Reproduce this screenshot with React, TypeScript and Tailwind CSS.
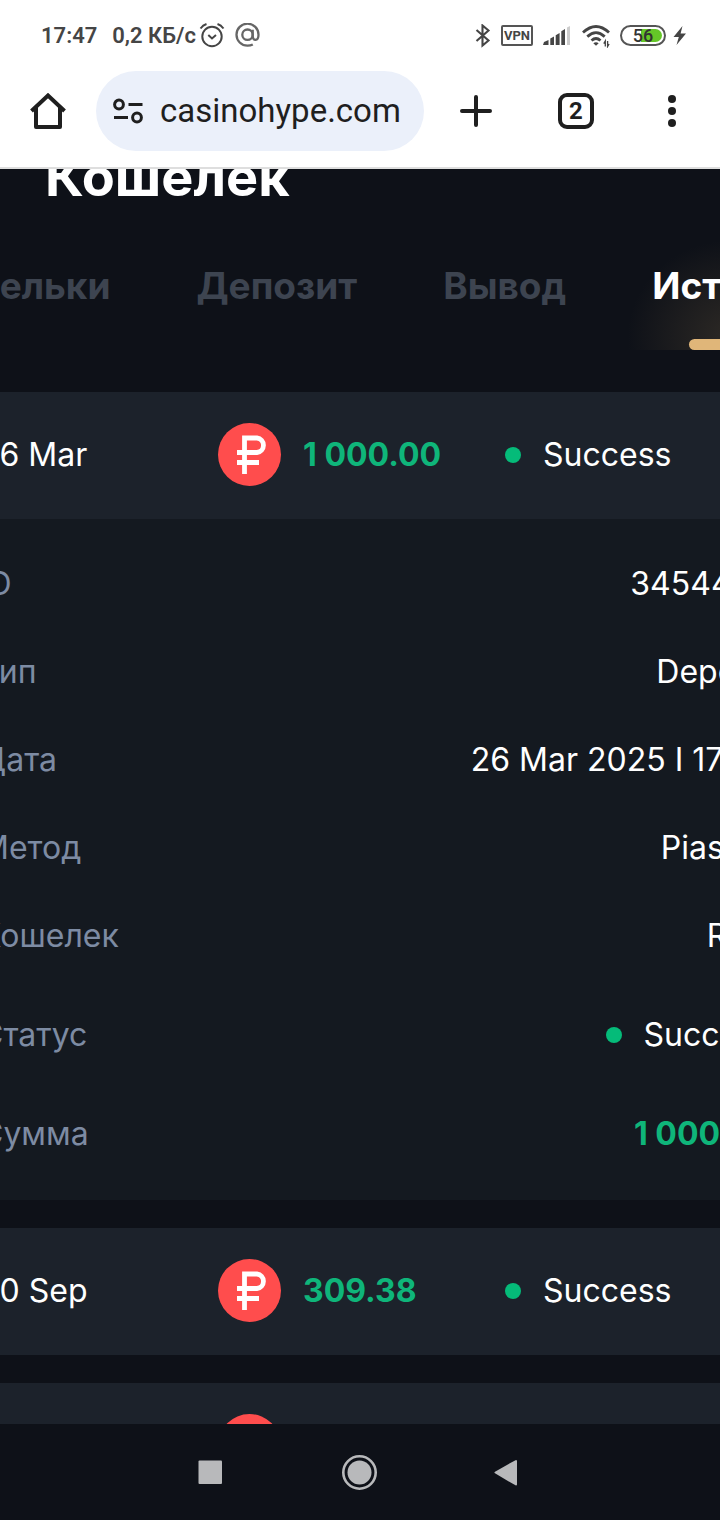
import { useState } from "react";

const details = [
  { label: "ID", value: "3454434" },
  { label: "Тип", value: "Deposit" },
  { label: "Дата", value: "26 Mar 2025 I 17:46" },
  { label: "Метод", value: "Piastrix" },
  { label: "Кошелек", value: "RUB" },
];

const tabs = ["Кошельки", "Депозит", "Вывод", "История"];

const StatusBar = () => (
  <div className="flex h-[71px] items-center justify-between bg-white pr-[33px] pl-[41px] font-[Roboto,sans-serif] text-[22px] font-semibold text-[#454545]">
    <div className="flex items-center">
      <span>17:47</span>
      <span className="ml-[15px]">0,2 КБ/с</span>
      <svg className="ml-[3px]" width="26" height="26" viewBox="0 0 26 26" fill="none" stroke="currentColor" strokeWidth="2">
        <circle cx="13" cy="13.5" r="9.7" />
        <path d="M1.5 5.5 Q4 2.2 7.5 1 M24.5 5.5 Q22 2.2 18.5 1" />
        <path d="M9.3 12.1 L13 15.5 L17 12.1" />
      </svg>
      <svg className="ml-[10px] text-[#666]" width="26" height="26" viewBox="0 0 26 26" fill="none" stroke="currentColor" strokeWidth="2.3">
        <circle cx="12.5" cy="11.7" r="5.2" />
        <path d="M17.7 6.7 V13.2 Q17.9 16.8 20.5 16.8 Q23.5 16.6 23.5 11.7 A11 11 0 1 0 12.5 22.7 Q15.5 22.7 17.8 21.5" />
      </svg>
    </div>

    <div className="flex items-center">
      <svg width="16" height="24" viewBox="0 0 16 24" fill="none" stroke="currentColor" strokeWidth="2.1">
        <path d="M1.5 6 L13.5 16.5 L7.5 21.5 V1.5 L13.5 6.5 L1.5 17" />
      </svg>
      <span className="ml-[10px] flex h-[21px] w-8 items-center justify-center rounded-[2px] border-2 border-[#555] text-[13px] font-bold">
        VPN
      </span>
      <svg className="ml-[10px]" width="28" height="20" viewBox="0 0 28 20" fill="currentColor">
        <path d="M0 19 L1 16 L5.5 14 V19 Z M7.3 19 V12.5 L11 10.5 V19 Z M12.7 19 V9.2 L16.6 7 V19 Z M18.3 19 V5.3 L22 3 V19 Z" />
        <path d="M24 19 V1.5 L27 0 V19 Z" fill="#ccc" />
      </svg>
      <svg className="ml-[11px]" width="29" height="24" viewBox="0 0 29 24" fill="none" stroke="currentColor" strokeWidth="2.8">
        <path d="M1 8.5 Q14 -3.5 27 8.5 M5.3 12.6 Q14 4.6 22.7 12.6 M9.5 16.5 Q14 12.4 18.5 16.5" />
        <path d="M11.3 19.2 Q14 17.3 16.7 19.2 L14 21.8 Z" fill="currentColor" stroke="none" />
        <path d="M23.3 22.5 V17 L21.8 19.6 M25.6 17 V22.5 L27.1 20" strokeWidth="1.3" />
      </svg>
      <div className="relative ml-[9px] flex h-[21px] w-[46px] items-center justify-center rounded-full border-2 border-[#555]">
        <span className="absolute inset-y-[2px] right-[2px] w-[21px] rounded-r-full bg-[#65c728]" />
        <span className="relative text-[18px] font-medium text-[#333]">56</span>
      </div>
      <svg className="ml-[7px]" width="14" height="20" viewBox="0 0 14 20" fill="currentColor">
        <path d="M9.5 0 L0.5 11 H5.8 L3.5 19 L13 7.5 H7.6 Z" />
      </svg>
    </div>
  </div>
);

const Toolbar = () => (
  <header className="flex h-[98px] items-start border-b-2 border-[#dedede] bg-white font-[Roboto,sans-serif] text-[#1f1f1f]">
    <button className="flex h-20 w-24 items-center justify-center" aria-label="Home">
      <svg width="36" height="36" viewBox="0 0 36 36" fill="none" stroke="currentColor" strokeWidth="4" strokeLinejoin="round">
        <path d="M1.5 18 L18 2.5 L34.5 18" strokeLinejoin="miter" />
        <path d="M6 14 V34 H30 V14" />
      </svg>
    </button>
    <div className="flex h-20 min-w-0 flex-1 items-center rounded-full bg-[#ebf0fa] pl-4">
      <svg className="shrink-0" width="32" height="28" viewBox="0 0 32 28" fill="none" stroke="currentColor" strokeWidth="3">
        <circle cx="7" cy="7.5" r="4.4" />
        <path d="M16.5 7.5 H30.5 M2 20.5 H16" />
        <circle cx="25" cy="20.5" r="4.4" />
      </svg>
      <input
        className="ml-4 w-full min-w-0 bg-transparent text-[33px] outline-none"
        aria-label="URL"
        defaultValue="casinohype.com"
      />
    </div>
    <button className="flex h-20 w-[104px] items-center justify-center" aria-label="New tab">
      <svg width="32" height="32" viewBox="0 0 32 32" stroke="currentColor" strokeWidth="4" strokeLinecap="round">
        <path d="M16 2 V30 M2 16 H30" />
      </svg>
    </button>
    <button className="flex h-20 w-24 items-center justify-center" aria-label="Tabs">
      <span className="flex size-9 items-center justify-center rounded-[9px] border-4 border-[#1f1f1f] text-2xl font-bold">
        2
      </span>
    </button>
    <button className="flex h-20 w-24 items-center justify-center" aria-label="Menu">
      <svg width="8" height="32" viewBox="0 0 8 32" fill="currentColor">
        <circle cx="4" cy="4" r="4" />
        <circle cx="4" cy="16" r="4" />
        <circle cx="4" cy="28" r="4" />
      </svg>
    </button>
  </header>
);

const RubleIcon = () => (
  <svg className="shrink-0" width="64" height="64" viewBox="0 0 64 64">
    <circle cx="31.5" cy="31.5" r="31.5" fill="#ff4d4d" />
    <path
      d="M26.5 51 V15 H39 A7.3 7.3 0 0 1 39 29.5 H19 M19 39.5 H41"
      fill="none"
      stroke="#fff"
      strokeWidth="4.8"
    />
  </svg>
);

const Status = () => (
  <span className="flex items-center gap-[22px]">
    <span className="size-4 rounded-full bg-[#05bb79]" />
    Success
  </span>
);

const RowHeader = ({ date, amount }: { date: string; amount: string }) => (
  <button className="flex h-[127px] w-full items-center bg-[#1c222b] pb-[2px] pl-[22px] text-left">
    <span className="w-[238px]">{date}</span>
    <RubleIcon />
    <span className="ml-[21px] w-[202px] font-bold text-[#0fb57a]">{amount}</span>
    <Status />
  </button>
);

const App = () => {
  const [active, setActive] = useState("История");

  return (
    <div className="flex h-screen flex-col overflow-hidden bg-[#0e1118]">
      <StatusBar />
      <Toolbar />

      <main className="min-h-0 flex-1 overflow-hidden font-[Inter,sans-serif] text-[32px] leading-10 text-white">
        <h1 className="-mt-6 pl-[45px] text-[54px] leading-[64px] font-bold">Кошелек</h1>

        <nav className="mt-[14px] -ml-[123px] flex">
          {tabs.map((tab) => (
            <button
              key={tab}
              onClick={() => setActive(tab)}
              className={`relative h-[127px] shrink-0 px-[43px] pb-[2px] text-[37px] font-bold ${
                active === tab
                  ? "bg-[radial-gradient(ellipse_at_50%_90%,#2d2925_0%,#0e1118_60%)] text-white"
                  : "text-[#3d4450]"
              }`}
            >
              {tab}
              {active === tab && (
                <span className="absolute bottom-0 left-1/2 h-[11px] w-[84px] -translate-x-1/2 rounded-full bg-[#e0b679]" />
              )}
            </button>
          ))}
        </nav>

        {/* History list is wider than the viewport on both sides */}
        <div className="mt-[42px] -mr-[74px] -ml-[42px] flex flex-col gap-7">
          <section className="bg-[#141920]">
            <RowHeader date="26 Mar" amount="1 000.00" />
            <dl className="px-[22px] pt-[21px] pb-[22px]">
              {details.map((item) => (
                <div key={item.label} className="flex h-[88px] items-center justify-between">
                  <dt className="text-[#7d8ba3]">{item.label}</dt>
                  <dd>{item.value}</dd>
                </div>
              ))}
              <div className="flex h-[110px] items-center justify-between">
                <dt className="text-[#7d8ba3]">Статус</dt>
                <dd>
                  <Status />
                </dd>
              </div>
              <div className="flex h-[88px] items-center justify-between">
                <dt className="text-[#7d8ba3]">Сумма</dt>
                <dd className="font-bold text-[#0fb57a]">1 000.00</dd>
              </div>
            </dl>
          </section>
          <RowHeader date="20 Sep" amount="309.38" />
          <RowHeader date="" amount="" />
        </div>
      </main>

      <footer className="flex h-24 items-center justify-center bg-[#0e1118] text-[#b8b9bb]">
        <button className="flex w-[148px] justify-center" aria-label="Recent apps">
          <svg width="36" height="36" viewBox="0 0 36 36" fill="currentColor">
            <rect x="4.5" y="6.5" width="23.5" height="23.5" rx="1" />
          </svg>
        </button>
        <button className="flex w-[148px] justify-center" aria-label="Home screen">
          <svg width="36" height="36" viewBox="0 0 36 36">
            <circle cx="17.5" cy="18.5" r="16.2" fill="none" stroke="currentColor" strokeWidth="2.6" />
            <circle cx="17.5" cy="18.5" r="12" fill="currentColor" />
          </svg>
        </button>
        <button className="flex w-[148px] justify-center" aria-label="Back">
          <svg width="36" height="36" viewBox="0 0 36 36" fill="currentColor" stroke="currentColor" strokeWidth="2" strokeLinejoin="round">
            <path d="M26 7 V30.5 L5.5 18.5 Z" />
          </svg>
        </button>
      </footer>
    </div>
  );
};

export default App;
